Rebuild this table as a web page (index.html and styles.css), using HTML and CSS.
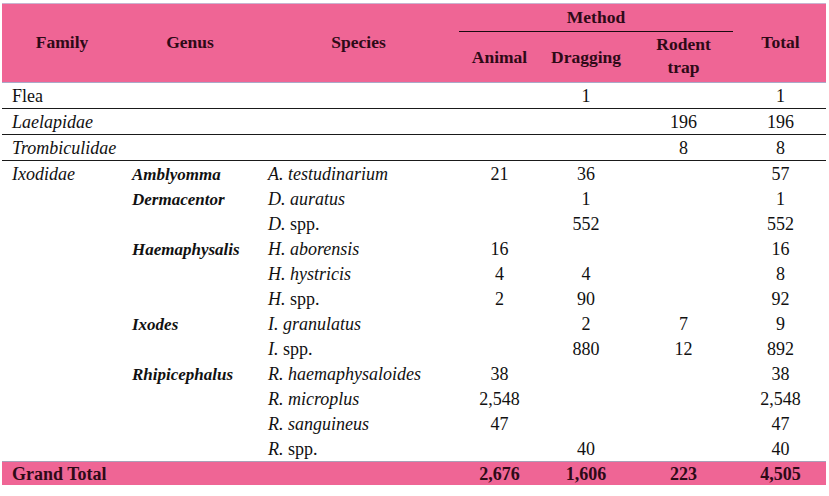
FILE: index.html
```html
<!DOCTYPE html>
<html>
<head>
<meta charset="utf-8">
<link rel="stylesheet" href="styles.css">
</head>
<body>
<table class="tbl">
  <colgroup>
    <col class="c-family"><col class="c-genus"><col class="c-species"><col class="c-animal"><col class="c-drag"><col class="c-rodent"><col class="c-total">
  </colgroup>
  <thead>
    <tr class="h1">
      <th rowspan="2">Family</th>
      <th rowspan="2">Genus</th>
      <th rowspan="2">Species</th>
      <th colspan="3" class="method"><span class="method-label">Method</span></th>
      <th rowspan="2">Total</th>
    </tr>
    <tr class="h2">
      <th>Animal</th>
      <th>Dragging</th>
      <th class="two">Rodent<br>trap</th>
    </tr>
  </thead>
  <tbody>
    <tr class="sep"><td>Flea</td><td></td><td></td><td class="n"></td><td class="n">1</td><td class="n"></td><td class="n">1</td></tr>
    <tr class="sep"><td><i>Laelapidae</i></td><td></td><td></td><td class="n"></td><td class="n"></td><td class="n">196</td><td class="n">196</td></tr>
    <tr class="sep"><td><i>Trombiculidae</i></td><td></td><td></td><td class="n"></td><td class="n"></td><td class="n">8</td><td class="n">8</td></tr>
    <tr><td><i>Ixodidae</i></td><td class="g">Amblyomma</td><td><i>A. testudinarium</i></td><td class="n">21</td><td class="n">36</td><td class="n"></td><td class="n">57</td></tr>
    <tr><td></td><td class="g">Dermacentor</td><td><i>D. auratus</i></td><td class="n"></td><td class="n">1</td><td class="n"></td><td class="n">1</td></tr>
    <tr><td></td><td></td><td><i>D.</i> spp.</td><td class="n"></td><td class="n">552</td><td class="n"></td><td class="n">552</td></tr>
    <tr><td></td><td class="g">Haemaphysalis</td><td><i>H. aborensis</i></td><td class="n">16</td><td class="n"></td><td class="n"></td><td class="n">16</td></tr>
    <tr><td></td><td></td><td><i>H. hystricis</i></td><td class="n">4</td><td class="n">4</td><td class="n"></td><td class="n">8</td></tr>
    <tr><td></td><td></td><td><i>H.</i> spp.</td><td class="n">2</td><td class="n">90</td><td class="n"></td><td class="n">92</td></tr>
    <tr><td></td><td class="g">Ixodes</td><td><i>I. granulatus</i></td><td class="n"></td><td class="n">2</td><td class="n">7</td><td class="n">9</td></tr>
    <tr><td></td><td></td><td><i>I.</i> spp.</td><td class="n"></td><td class="n">880</td><td class="n">12</td><td class="n">892</td></tr>
    <tr><td></td><td class="g">Rhipicephalus</td><td><i>R. haemaphysaloides</i></td><td class="n">38</td><td class="n"></td><td class="n"></td><td class="n">38</td></tr>
    <tr><td></td><td></td><td><i>R. microplus</i></td><td class="n">2,548</td><td class="n"></td><td class="n"></td><td class="n">2,548</td></tr>
    <tr><td></td><td></td><td><i>R. sanguineus</i></td><td class="n">47</td><td class="n"></td><td class="n"></td><td class="n">47</td></tr>
    <tr><td></td><td></td><td><i>R.</i> spp.</td><td class="n"></td><td class="n">40</td><td class="n"></td><td class="n">40</td></tr>
  </tbody>
  <tfoot>
    <tr class="total"><td colspan="3">Grand Total</td><td class="n">2,676</td><td class="n">1,606</td><td class="n">223</td><td class="n">4,505</td></tr>
  </tfoot>
</table>
</body>
</html>
```

FILE: styles.css
```css
html, body {
  margin: 0;
  padding: 0;
  background: #ffffff;
}
body {
  padding: 3px 0 0 2px;
  font-family: "Liberation Serif", "Times New Roman", serif;
  font-size: 18px;
  color: #111111;
}
.tbl {
  border-collapse: collapse;
  table-layout: fixed;
  width: 824px;
}
.c-family { width: 120px; }
.c-genus { width: 136px; }
.c-species { width: 201px; }
.c-animal { width: 81px; }
.c-drag { width: 92px; }
.c-rodent { width: 103px; }
.c-total { width: 91px; }

thead th {
  background: #ef6595;
  color: #2e0a17;
  font-weight: bold;
  font-size: 17.5px;
  text-align: center;
  padding: 0;
  line-height: 23px;
}
thead tr.h1 th {
  border-top: 1px solid #c8b4d0;
}
thead tr.h1 { height: 28px; }
thead tr.h2 { height: 50px; }
thead tr.h2 th, thead tr.h1 th[rowspan] {
  border-bottom: 1px solid #a9a9c8;
}
thead tr.h2 th {
  padding-top: 2px;
}
thead tr.h2 th.two {
  padding-top: 0;
  padding-bottom: 2px;
}
th.method {
  vertical-align: top;
  padding: 2px 2px 0 0;
}
.method-label {
  display: block;
  border-bottom: 1px solid #1a0a10;
  line-height: 23px;
  padding-bottom: 2px;
}
tbody td, tfoot td {
  padding: 2px 0 0 10px;
  height: 23px;
  line-height: 23px;
  white-space: nowrap;
}
tbody tr.sep td {
  border-bottom: 1px solid #1a1a1a;
  height: 22px;
}
td.n {
  text-align: center;
  padding-left: 0;
}
td.g {
  font-weight: bold;
  font-style: italic;
  font-size: 17px;
}
tfoot tr.total td {
  background: #ef6595;
  color: #2e0a17;
  font-weight: bold;
  border-top: 1px solid #a9a0b8;
  padding-top: 1px;
  height: 22px;
  line-height: 22px;
}
```
